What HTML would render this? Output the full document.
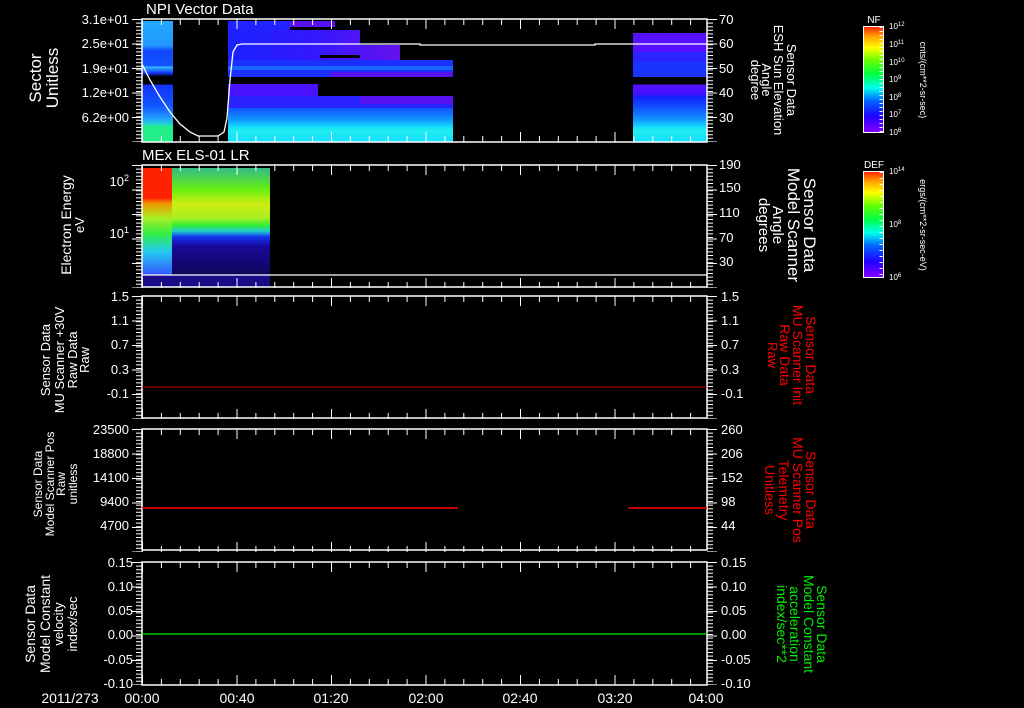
<!DOCTYPE html>
<html><head><meta charset="utf-8"><style>
html,body{margin:0;padding:0;background:#000;}
svg{display:block;}
text{font-family:"Liberation Sans",sans-serif;fill:#fff;}
</style></head><body>
<svg width="1024" height="708" viewBox="0 0 1024 708" xmlns="http://www.w3.org/2000/svg">
<defs>
<linearGradient id="l1" x1="0" y1="0" x2="0" y2="1">
<stop offset="0" stop-color="#22aaff"/><stop offset="0.2" stop-color="#2299ff"/><stop offset="0.25" stop-color="#1144ff"/><stop offset="0.37" stop-color="#1155ff"/><stop offset="0.38" stop-color="#33bbff"/><stop offset="0.43" stop-color="#1133ff"/><stop offset="0.46" stop-color="#000"/><stop offset="0.52" stop-color="#000"/><stop offset="0.53" stop-color="#1133ff"/><stop offset="0.7" stop-color="#1155ff"/><stop offset="0.8" stop-color="#2299ff"/><stop offset="0.86" stop-color="#22ddcc"/><stop offset="0.87" stop-color="#22ee88"/><stop offset="1" stop-color="#22ee88"/>
</linearGradient>
<linearGradient id="m1" x1="0" y1="0" x2="0" y2="1">
<stop offset="0" stop-color="#2222ff"/><stop offset="0.38" stop-color="#1122ff"/><stop offset="0.39" stop-color="#1166ff"/><stop offset="0.44" stop-color="#2233ff"/><stop offset="0.46" stop-color="#000"/><stop offset="0.52" stop-color="#000"/><stop offset="0.53" stop-color="#5511ff"/><stop offset="0.6" stop-color="#4411ff"/><stop offset="0.63" stop-color="#1122ff"/><stop offset="0.72" stop-color="#1155ff"/><stop offset="0.82" stop-color="#1199ff"/><stop offset="0.86" stop-color="#11ccff"/><stop offset="0.9" stop-color="#22eeee"/><stop offset="1" stop-color="#11ddff"/>
</linearGradient>
<linearGradient id="e1" x1="0" y1="0" x2="0" y2="1">
<stop offset="0" stop-color="#33bb88"/><stop offset="0.18" stop-color="#66ee11"/><stop offset="0.3" stop-color="#ccee11"/><stop offset="0.42" stop-color="#aaee22"/><stop offset="0.48" stop-color="#33ee33"/><stop offset="0.53" stop-color="#22cccc"/><stop offset="0.58" stop-color="#1133ee"/><stop offset="0.66" stop-color="#1a0899"/><stop offset="1" stop-color="#0c0440"/>
</linearGradient>
<linearGradient id="e0" x1="0" y1="0" x2="0" y2="1">
<stop offset="0" stop-color="#ff2200"/><stop offset="0.25" stop-color="#ff2200"/><stop offset="0.3" stop-color="#ee9900"/><stop offset="0.42" stop-color="#aaee22"/><stop offset="0.55" stop-color="#33ee44"/><stop offset="0.7" stop-color="#22ccee"/><stop offset="0.9" stop-color="#3355ff"/><stop offset="1" stop-color="#4422ff"/>
</linearGradient>
<linearGradient id="rb" x1="0" y1="1" x2="0" y2="0">
<stop offset="0" stop-color="#8800ff"/><stop offset="0.15" stop-color="#2200ff"/><stop offset="0.3" stop-color="#0066ff"/><stop offset="0.42" stop-color="#00ffee"/><stop offset="0.55" stop-color="#00ff44"/><stop offset="0.68" stop-color="#66ff00"/><stop offset="0.8" stop-color="#ffff00"/><stop offset="0.9" stop-color="#ffaa00"/><stop offset="1" stop-color="#ff2200"/>
</linearGradient>
<linearGradient id="pb" x1="0" y1="0" x2="1" y2="0">
<stop offset="0" stop-color="#1a22ff"/><stop offset="0.5" stop-color="#3318ff"/><stop offset="1" stop-color="#6611ee"/>
</linearGradient>
</defs>

<!-- Panel 1 data -->
<rect x="142" y="21" width="31" height="121" fill="url(#l1)"/>
<rect x="228" y="21" width="225" height="121" fill="url(#m1)"/>
<!-- upper region shaping -->
<rect x="290" y="21" width="163" height="9" fill="#000"/>
<rect x="290" y="21" width="45" height="6" fill="#5a11f0"/>
<rect x="228" y="30" width="172" height="30" fill="url(#pb)"/>
<rect x="360" y="30" width="93" height="15" fill="#000"/>
<rect x="400" y="45" width="53" height="15" fill="#000"/>
<rect x="320" y="55" width="40" height="3" fill="#000"/>
<rect x="228" y="60" width="225" height="17" fill="#1a30ff"/>
<rect x="228" y="66" width="225" height="4" fill="#1a66ff"/>
<rect x="330" y="72" width="123" height="5" fill="#5511ee"/>
<rect x="228" y="84" width="90" height="12" fill="#4a11ff"/>
<rect x="318" y="84" width="135" height="12" fill="#000"/>
<rect x="228" y="96" width="225" height="12" fill="#2a22ff"/>
<rect x="360" y="96" width="93" height="8" fill="#5511ee"/>
<!-- right block -->
<rect x="633" y="21" width="74" height="121" fill="url(#m1)"/>
<rect x="633" y="21" width="74" height="12" fill="#000"/>
<rect x="633" y="33" width="74" height="29" fill="#5511ff"/>
<rect x="633" y="52" width="74" height="10" fill="#2a22ff"/>
<rect x="633" y="62" width="74" height="15" fill="#1a33ff"/>

<!-- Panel 2 data -->
<rect x="142" y="168" width="128" height="119" fill="url(#e1)"/>
<rect x="142" y="168" width="30" height="119" fill="url(#e0)"/>
<rect x="142" y="275" width="128" height="12" fill="#1a0a88"/>

<!-- Panel frames -->
<g fill="none" stroke="#fff" stroke-width="1.5">
<rect x="142" y="19" width="565" height="123"/>
<rect x="142" y="165" width="565" height="122"/>
<rect x="142" y="296" width="565" height="122"/>
<rect x="142" y="429" width="565" height="121"/>
<rect x="142" y="562" width="565" height="123"/>
</g>
<line x1="142" y1="275" x2="707" y2="275" stroke="#fff" stroke-width="1.2"/>

<!-- P1 curve -->
<polyline fill="none" stroke="#fff" stroke-width="1.3" points="142,64 150,80 160,97 170,112 180,124 190,132 198,136 218,136 224,132 227,118 230,80 233,52 237,45 242,44 420,44 420,45 595,45 595,44 707,44"/>

<!-- data lines -->
<line x1="142" y1="387" x2="707" y2="387" stroke="#cc0000" stroke-width="1"/>
<line x1="142" y1="508" x2="458" y2="508" stroke="#ff0000" stroke-width="1.5"/>
<line x1="628" y1="508" x2="707" y2="508" stroke="#ff0000" stroke-width="1.5"/>
<line x1="142" y1="634" x2="707" y2="634" stroke="#00ee00" stroke-width="1.2"/>

<!-- ticks -->
<g stroke="#fff" stroke-width="1">
<g id="tt">
<line x1="142" y1="22" x2="707" y2="22" stroke-width="6" stroke-dasharray="1 17.9"/>
<line x1="142" y1="24" x2="707" y2="24" stroke-width="10" stroke-dasharray="1 93.5"/>
<line x1="142" y1="139" x2="707" y2="139" stroke-width="6" stroke-dasharray="1 17.9"/>
<line x1="142" y1="137" x2="707" y2="137" stroke-width="10" stroke-dasharray="1 93.5"/>
<line x1="139" y1="19" x2="139" y2="142" stroke-width="6" stroke-dasharray="1 2.6"/>
<line x1="137" y1="19" x2="137" y2="142" stroke-width="10" stroke-dasharray="1 23.5"/>
<line x1="710" y1="19" x2="710" y2="142" stroke-width="6" stroke-dasharray="1 2.6"/>
<line x1="712" y1="19" x2="712" y2="142" stroke-width="10" stroke-dasharray="1 23.5"/>
</g>
<use href="#tt" y="146"/>
<use href="#tt" y="277"/>
<use href="#tt" y="410"/>
<use href="#tt" y="543"/>
</g>

<!-- Title texts -->
<text x="146" y="14" font-size="15">NPI Vector Data</text>
<text x="142" y="160" font-size="15">MEx ELS-01 LR</text>

<!-- Left labels -->
<g font-size="13" text-anchor="end">
<text x="129" y="24">3.1e+01</text><text x="129" y="48">2.5e+01</text><text x="129" y="73">1.9e+01</text><text x="129" y="97">1.2e+01</text><text x="129" y="122">6.2e+00</text>
<text x="129" y="186">10<tspan font-size="9" dy="-5">2</tspan></text>
<text x="129" y="238">10<tspan font-size="9" dy="-5">1</tspan></text>
<text x="129" y="301">1.5</text><text x="129" y="325">1.1</text><text x="129" y="349">0.7</text><text x="129" y="374">0.3</text><text x="129" y="398">-0.1</text>
<text x="129" y="434">23500</text><text x="129" y="458">18800</text><text x="129" y="482">14100</text><text x="129" y="506">9400</text><text x="129" y="530">4700</text>
<text x="133" y="567">0.15</text><text x="133" y="591">0.10</text><text x="133" y="615">0.05</text><text x="133" y="639">0.00</text><text x="133" y="664">-0.05</text><text x="133" y="688">-0.10</text>
</g>
<!-- Right labels -->
<g font-size="13">
<text x="719" y="24">70</text><text x="719" y="48">60</text><text x="719" y="73">50</text><text x="719" y="97">40</text><text x="719" y="122">30</text>
<text x="719" y="169">190</text><text x="719" y="192">150</text><text x="719" y="217">110</text><text x="719" y="242">70</text><text x="719" y="266">30</text>
<text x="721" y="301">1.5</text><text x="721" y="325">1.1</text><text x="721" y="349">0.7</text><text x="721" y="374">0.3</text><text x="721" y="398">-0.1</text>
<text x="721" y="434">260</text><text x="721" y="458">206</text><text x="721" y="482">152</text><text x="721" y="506">98</text><text x="721" y="530">44</text>
<text x="721" y="567">0.15</text><text x="721" y="591">0.10</text><text x="721" y="615">0.05</text><text x="721" y="639">0.00</text><text x="721" y="664">-0.05</text><text x="721" y="688">-0.10</text>
</g>
<!-- Bottom time labels -->
<g font-size="14" text-anchor="middle">
<text x="70" y="703">2011/273</text>
<text x="142" y="703">00:00</text><text x="237" y="703">00:40</text><text x="331" y="703">01:20</text><text x="426" y="703">02:00</text><text x="520" y="703">02:40</text><text x="615" y="703">03:20</text><text x="706" y="703">04:00</text>
</g>

<!-- Left axis titles -->
<g text-anchor="middle">
<text transform="translate(41,78) rotate(-90)" font-size="17">Sector</text>
<text transform="translate(58,78) rotate(-90)" font-size="17">Unitless</text>
<text transform="translate(71,225) rotate(-90)" font-size="14">Electron Energy</text>
<text transform="translate(84,225) rotate(-90)" font-size="13">eV</text>
<text transform="translate(50,360) rotate(-90)" font-size="13">Sensor Data</text>
<text transform="translate(64,360) rotate(-90)" font-size="13">MU Scanner +30V</text>
<text transform="translate(77,360) rotate(-90)" font-size="13">Raw Data</text>
<text transform="translate(89,360) rotate(-90)" font-size="13">Raw</text>
<text transform="translate(42,484) rotate(-90)" font-size="12">Sensor Data</text>
<text transform="translate(54,484) rotate(-90)" font-size="12">Model Scanner Pos</text>
<text transform="translate(65,484) rotate(-90)" font-size="12">Raw</text>
<text transform="translate(77,484) rotate(-90)" font-size="12">unitless</text>
<text transform="translate(35,624) rotate(-90)" font-size="14">Sensor Data</text>
<text transform="translate(50,624) rotate(-90)" font-size="14">Model Constant</text>
<text transform="translate(63,624) rotate(-90)" font-size="13">velocity</text>
<text transform="translate(77,624) rotate(-90)" font-size="13">index/sec</text>
</g>

<!-- Right axis titles -->
<g text-anchor="middle">
<text transform="translate(787,80) rotate(90)" font-size="13">Sensor Data</text>
<text transform="translate(774,80) rotate(90)" font-size="13">ESH Sun Elevation</text>
<text transform="translate(762,80) rotate(90)" font-size="13">Angle</text>
<text transform="translate(751,80) rotate(90)" font-size="13">degree</text>
<text transform="translate(804,225) rotate(90)" font-size="17">Sensor Data</text>
<text transform="translate(788,225) rotate(90)" font-size="17">Model Scanner</text>
<text transform="translate(773,225) rotate(90)" font-size="15">Angle</text>
<text transform="translate(759,225) rotate(90)" font-size="15">degrees</text>
<text transform="translate(806,355) rotate(90)" font-size="14" style="fill:#ff0000">Sensor Data</text>
<text transform="translate(793,355) rotate(90)" font-size="14" style="fill:#ff0000">MU Scanner Init</text>
<text transform="translate(780,355) rotate(90)" font-size="14" style="fill:#ff0000">Raw Data</text>
<text transform="translate(768,355) rotate(90)" font-size="13" style="fill:#ff0000">Raw</text>
<text transform="translate(806,490) rotate(90)" font-size="14" style="fill:#ff0000">Sensor Data</text>
<text transform="translate(793,490) rotate(90)" font-size="14" style="fill:#ff0000">MU Scanner Pos</text>
<text transform="translate(779,490) rotate(90)" font-size="14" style="fill:#ff0000">Telemetry</text>
<text transform="translate(765,490) rotate(90)" font-size="14" style="fill:#ff0000">Unitless</text>
<text transform="translate(817,624) rotate(90)" font-size="14" style="fill:#00ee00">Sensor Data</text>
<text transform="translate(804,624) rotate(90)" font-size="14" style="fill:#00ee00">Model Constant</text>
<text transform="translate(790,624) rotate(90)" font-size="14" style="fill:#00ee00">acceleration</text>
<text transform="translate(777,624) rotate(90)" font-size="14" style="fill:#00ee00">index/sec**2</text>
</g>

<!-- Color bars -->
<rect x="863.5" y="26.5" width="20" height="106" fill="url(#rb)" stroke="#fff" stroke-width="1"/>
<rect x="863.5" y="171.5" width="20" height="106" fill="url(#rb)" stroke="#fff" stroke-width="1"/>
<g stroke="#fff" stroke-width="3">
<line x1="881" y1="27" x2="881" y2="132" stroke-dasharray="1 3"/>
<line x1="881" y1="172" x2="881" y2="277" stroke-dasharray="1 5"/>
</g>
<text x="874" y="23" font-size="10" text-anchor="middle">NF</text>
<text x="874" y="168" font-size="10" text-anchor="middle">DEF</text>
<g font-size="8">
<text x="889" y="29">10<tspan font-size="6" dy="-3">12</tspan></text>
<text x="889" y="47">10<tspan font-size="6" dy="-3">11</tspan></text>
<text x="889" y="65">10<tspan font-size="6" dy="-3">10</tspan></text>
<text x="889" y="82">10<tspan font-size="6" dy="-3">9</tspan></text>
<text x="889" y="100">10<tspan font-size="6" dy="-3">8</tspan></text>
<text x="889" y="117">10<tspan font-size="6" dy="-3">7</tspan></text>
<text x="889" y="135">10<tspan font-size="6" dy="-3">6</tspan></text>
<text x="889" y="174">10<tspan font-size="6" dy="-3">14</tspan></text>
<text x="889" y="227">10<tspan font-size="6" dy="-3">8</tspan></text>
<text x="889" y="280">10<tspan font-size="6" dy="-3">6</tspan></text>
</g>
<text transform="translate(920,80) rotate(90)" font-size="9" text-anchor="middle">cnts/(cm**2-sr-sec)</text>
<text transform="translate(920,225) rotate(90)" font-size="9" text-anchor="middle">ergs/(cm**2-sr-sec-eV)</text>
</svg>
</body></html>
